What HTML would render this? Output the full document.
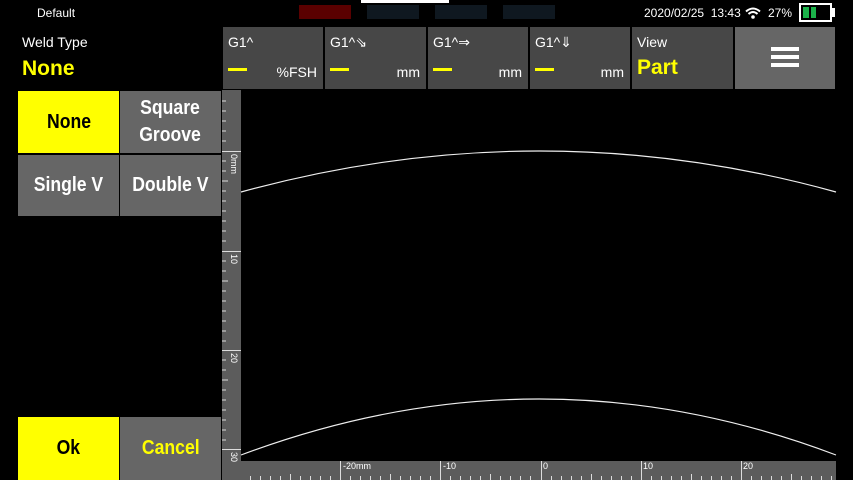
<html><head><style>
body{margin:0;width:853px;height:480px;background:#000;position:relative;overflow:hidden;font-family:"Liberation Sans","DejaVu Sans",sans-serif;color:#fff}
div{position:absolute;box-sizing:border-box}
.box{top:27px;height:62px;background:#474747}
.lbl{left:5px;top:7px;font-size:14px}
.dash{left:5px;top:41px;width:19px;height:3px;background:#ff0}
.unit{right:6px;top:37px;font-size:14px}
.btn{display:flex;align-items:center;justify-content:center;text-align:center;font-size:20px;font-weight:bold;background:#666;line-height:27px}
.btn span{display:inline-block;transform:scaleX(.88)}
</style></head><body>
<div style="left:37px;top:6px;font-size:12px">Default</div>
<div style="left:361px;top:0;width:88px;height:3px;background:#fff"></div>
<div style="left:299px;top:5px;width:52px;height:14px;background:#5a0000"></div>
<div style="left:367px;top:5px;width:52px;height:14px;background:#0f1820"></div>
<div style="left:435px;top:5px;width:52px;height:14px;background:#0f1820"></div>
<div style="left:503px;top:5px;width:52px;height:14px;background:#0f1820"></div>
<div style="left:644px;top:6px;font-size:12px">2020/02/25&nbsp; 13:43</div>
<svg style="position:absolute;left:745px;top:7px" width="16" height="12" viewBox="0 0 16 12"><path d="M1 4.5Q8 -1.5 15 4.5M3.5 7Q8 3 12.5 7" stroke="#fff" stroke-width="2" fill="none"/><circle cx="8" cy="10" r="1.8" fill="#fff"/></svg>
<div style="left:768px;top:6px;font-size:12px">27%</div>
<div style="left:799px;top:3px;width:33px;height:19px;border:2px solid #fff;background:#000"></div>
<div style="left:832px;top:8px;width:3px;height:9px;background:#fff"></div>
<div style="left:803px;top:7px;width:6px;height:11px;background:#1bb24a"></div>
<div style="left:811px;top:7px;width:5px;height:11px;background:#1bb24a"></div>
<div style="left:22px;top:34px;font-size:14px">Weld Type</div>
<div style="left:22px;top:57px;font-size:21px;font-weight:bold;color:#ff0">None</div>
<div class="box" style="left:223px;width:100px"><div class="lbl">G1^</div><div class="dash"></div><div class="unit">%FSH</div></div>
<div class="box" style="left:325px;width:101px"><div class="lbl">G1^⇘</div><div class="dash"></div><div class="unit">mm</div></div>
<div class="box" style="left:428px;width:100px"><div class="lbl">G1^⇒</div><div class="dash"></div><div class="unit">mm</div></div>
<div class="box" style="left:530px;width:100px"><div class="lbl">G1^⇓</div><div class="dash"></div><div class="unit">mm</div></div>
<div class="box" style="left:632px;width:101px"><div class="lbl">View</div><div style="left:5px;top:29px;font-size:21px;font-weight:bold;color:#ff0">Part</div></div>
<div class="box" style="left:735px;width:100px;background:#666"><div style="left:36px;top:20px;width:28px;height:4px;background:#fff;box-shadow:0 8px 0 #fff,0 16px 0 #fff"></div></div>
<div class="btn" style="left:18px;top:91px;width:101px;height:62px;background:#ff0;color:#000"><span>None</span></div>
<div class="btn" style="left:120px;top:91px;width:101px;height:62px"><span>Square<br>Groove</span></div>
<div class="btn" style="left:18px;top:155px;width:101px;height:61px"><span>Single V</span></div>
<div class="btn" style="left:120px;top:155px;width:101px;height:61px"><span>Double V</span></div>
<div class="btn" style="left:18px;top:417px;width:101px;height:63px;background:#ff0;color:#000"><span>Ok</span></div>
<div class="btn" style="left:120px;top:417px;width:101px;height:63px;color:#ff0"><span>Cancel</span></div>
<svg style="position:absolute;left:0;top:0" width="853" height="480">
<rect x="222" y="90" width="19" height="390" fill="#5c5c5c"/>
<rect x="241" y="461" width="595" height="19" fill="#5c5c5c"/>
<g stroke="#ddd" stroke-width="1">
<path d="M222 101h4M222 111h4M222 121h4M222 131h4M222 141h4M222 161h4M222 171h4M222 181h6M222 191h4M222 201h4M222 211h4M222 221h4M222 231h4M222 241h4M222 261h4M222 271h4M222 281h6M222 291h4M222 301h4M222 311h4M222 321h4M222 331h4M222 341h4M222 360h4M222 370h4M222 380h6M222 390h4M222 400h4M222 410h4M222 420h4M222 430h4M222 440h4"/>
<path d="M222 151.5h19M222 251.5h19M222 350.5h19M222 449.5h19"/>
<path d="M340.5 461v19M440.5 461v19M541.5 461v19M641.5 461v19M741.5 461v19"/>
</g>
<g stroke="#ddd"><path id="t" d="M250.5 480v-4M260.5 480v-4M270.5 480v-4M280.5 480v-4M290.5 480v-6M300.5 480v-4M310.5 480v-4M320.5 480v-4M330.5 480v-4"/>
<use href="#t" x="100"/><use href="#t" x="200"/><use href="#t" x="301"/><use href="#t" x="401"/><use href="#t" x="501"/></g>
<g fill="#fff" font-size="9" font-family="Liberation Sans"><text x="343" y="469">-20mm</text><text x="443" y="469">-10</text><text x="543" y="469">0</text><text x="643" y="469">10</text><text x="743" y="469">20</text>
<text transform="translate(231,154) rotate(90)">0mm</text><text transform="translate(231,254) rotate(90)">10</text><text transform="translate(231,353) rotate(90)">20</text><text transform="translate(231,452) rotate(90)">30</text></g>
<path d="M241 192Q540 110 836 192" stroke="#eee" fill="none" stroke-width="1.2"/>
<path d="M241 455Q540 343 836 455" stroke="#eee" fill="none" stroke-width="1.2"/>
</svg>
</body></html>
